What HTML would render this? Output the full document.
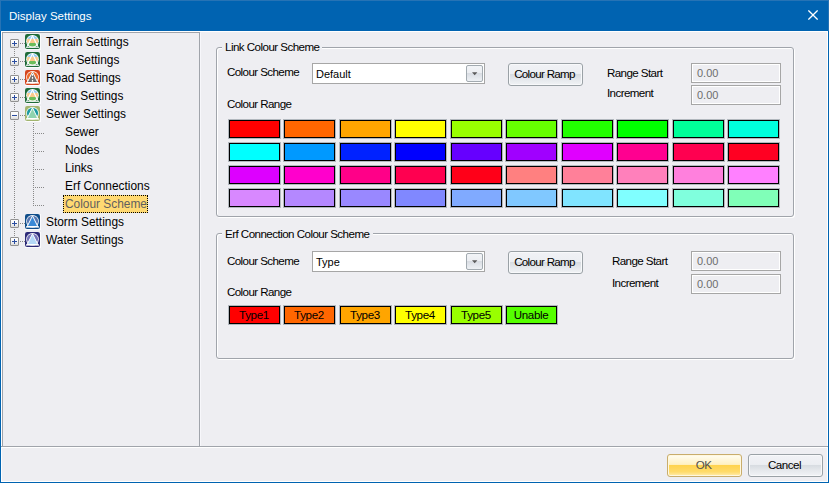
<!DOCTYPE html>
<html><head><meta charset="utf-8"><style>
*{box-sizing:border-box;margin:0;padding:0}
html,body{width:829px;height:483px;overflow:hidden;background:#EEEEF2;font-family:"Liberation Sans",sans-serif}
#win{position:absolute;left:0;top:0;width:829px;height:483px;background:#EEEEF2}
#title{position:absolute;left:0;top:0;width:829px;height:31px;background:#0063B1;box-shadow:inset 1px 1px 0 #2673B5, inset -1px 0 0 #2673B5}
#title .tx{position:absolute;left:9px;top:9px;font-size:11.5px;line-height:14px;color:#fff;white-space:nowrap}
#close{position:absolute;left:808px;top:10px}
.hl{position:absolute;background:#fff}
.gl{position:absolute;background:#A0A4AB}
.pm{position:absolute;left:10px;width:9px;height:9px;border:1px solid #919191;border-radius:1px;background:linear-gradient(#fff 0%,#f7f7f7 50%,#dcdcdc 100%)}
.ph{position:absolute;left:1px;top:3px;width:5px;height:1px;background:#2A4CA0}
.pv{position:absolute;left:3px;top:1px;width:1px;height:5px;background:#2A4CA0}
.icw{position:absolute;left:25px;width:16px;height:16px}
.ico{display:block}
.tt{position:absolute;font-size:11.9px;line-height:19px;color:#000;white-space:nowrap}
.sel{position:absolute;left:63px;width:85px;height:18px;background:#FFD972;border:1px dotted #000}
.seltxt{color:#5f5f5f}
.lab{position:absolute;font-size:11.6px;letter-spacing:-0.6px;line-height:13px;color:#000;white-space:nowrap}
.grp{position:absolute;left:216px;width:578px;border:1px solid #A0A4AB;border-radius:3px;box-shadow:inset 1px 1px 0 #fff, 1px 1px 0 #fff}
.legend{position:absolute;left:222px;height:14px;background:#EEEEF2;font-size:11.6px;letter-spacing:-0.55px;line-height:14px;padding-left:3px;white-space:nowrap}
.combo{position:absolute;left:312px;width:173px;height:21px;background:#fff;border:1px solid #A6A6A6}
.ctext{position:absolute;left:3px;top:4px;font-size:11px;letter-spacing:0px;line-height:13px;white-space:nowrap}
.dbtn{position:absolute;left:153px;top:1px;width:17px;height:17px;border:1px solid #A2AAB0;border-radius:2px;background:linear-gradient(#F2F4F7 0%,#ECEEF2 45%,#D9DDE3 50%,#EEF1F5 100%);overflow:hidden}
.arrow{position:absolute;left:5px;top:6px}
.btn{position:absolute;border:1px solid #9AA1A6;border-radius:3px;background:linear-gradient(#F1F2F6 0%,#ECEEF2 45%,#D8DCE1 50%,#E6E9ED 75%,#F1F3F6 100%);text-align:center;box-shadow:inset 0 0 0 1px #F8F9FB}
.btn span,.okb span{position:absolute;left:0;right:2px;top:3px;font-size:11.6px;letter-spacing:-0.7px;line-height:13px;white-space:nowrap;color:#000}
.okb{position:absolute;border:1px solid #C9AD6C;border-radius:3px;background:linear-gradient(#FFFDF3 0%,#FFF1C2 45%,#FFD34E 50%,#FFDB6B 80%,#FFEDB0 100%);text-align:center;box-shadow:inset 0 0 0 1px #FFF8E0}
.okb span{color:#505050}
.tb{position:absolute;left:691px;width:90px;height:20px;border:1px solid #A6A6A6;box-shadow:inset 0 0 0 1px #fff;background:#EEEEF2}
.tb span{position:absolute;left:5px;top:3px;font-size:11px;line-height:13px;color:#6D6D6D;white-space:nowrap}
.sw{position:absolute;width:51px;height:18px;border:1px solid #000;box-shadow:0 0 0 1px rgba(40,60,70,.3)}
.swt{padding-right:1px;text-align:center;font-size:11.6px;letter-spacing:-0.35px;line-height:16px;color:#000;white-space:nowrap}
</style></head><body>
<div id="win">
<div id="title"><div class="tx">Display Settings</div>
<svg id="close" width="10" height="10" viewBox="0 0 10 10"><path d="M0.4 0.4 L9.6 9.6" stroke="#fff" stroke-width="1.25"/><path d="M9.6 0.4 L0.4 9.6" stroke="#fff" stroke-width="1.25"/></svg>
</div>
<div style="position:absolute;left:0;top:31px;width:1px;height:452px;background:#0063B1"></div><div style="position:absolute;left:828px;top:31px;width:1px;height:452px;background:#0063B1"></div><div style="position:absolute;left:0;top:482px;width:829px;height:1px;background:#0063B1"></div>
<div class="hl" style="left:1px;top:31px;width:827px;height:1px"></div>
<div class="hl" style="left:1px;top:31px;width:1px;height:451px"></div>
<div class="hl" style="left:827px;top:31px;width:1px;height:451px"></div>
<div class="hl" style="left:1px;top:481px;width:827px;height:1px"></div>
<div class="gl" style="left:2px;top:32px;width:198px;height:1px"></div>
<div class="gl" style="left:2px;top:32px;width:1px;height:415px"></div>
<div class="gl" style="left:199px;top:32px;width:1px;height:415px"></div>
<div class="gl" style="left:1px;top:446px;width:827px;height:1px"></div><div class="hl" style="left:200px;top:33px;width:1px;height:413px;background:#F7F7FB"></div>
<div class="hl" style="left:1px;top:447px;width:827px;height:1px"></div>
<div style="position:absolute;left:0;top:0;fill:#888"><svg style="position:absolute;left:0;top:0" width="200" height="260"><rect x="20" y="43" width="1" height="1"/><rect x="22" y="43" width="1" height="1"/><rect x="24" y="43" width="1" height="1"/><rect x="20" y="61" width="1" height="1"/><rect x="22" y="61" width="1" height="1"/><rect x="24" y="61" width="1" height="1"/><rect x="20" y="79" width="1" height="1"/><rect x="22" y="79" width="1" height="1"/><rect x="24" y="79" width="1" height="1"/><rect x="20" y="97" width="1" height="1"/><rect x="22" y="97" width="1" height="1"/><rect x="24" y="97" width="1" height="1"/><rect x="20" y="115" width="1" height="1"/><rect x="22" y="115" width="1" height="1"/><rect x="24" y="115" width="1" height="1"/><rect x="35" y="133" width="1" height="1"/><rect x="37" y="133" width="1" height="1"/><rect x="39" y="133" width="1" height="1"/><rect x="41" y="133" width="1" height="1"/><rect x="43" y="133" width="1" height="1"/><rect x="35" y="151" width="1" height="1"/><rect x="37" y="151" width="1" height="1"/><rect x="39" y="151" width="1" height="1"/><rect x="41" y="151" width="1" height="1"/><rect x="43" y="151" width="1" height="1"/><rect x="35" y="169" width="1" height="1"/><rect x="37" y="169" width="1" height="1"/><rect x="39" y="169" width="1" height="1"/><rect x="41" y="169" width="1" height="1"/><rect x="43" y="169" width="1" height="1"/><rect x="35" y="187" width="1" height="1"/><rect x="37" y="187" width="1" height="1"/><rect x="39" y="187" width="1" height="1"/><rect x="41" y="187" width="1" height="1"/><rect x="43" y="187" width="1" height="1"/><rect x="35" y="205" width="1" height="1"/><rect x="37" y="205" width="1" height="1"/><rect x="39" y="205" width="1" height="1"/><rect x="41" y="205" width="1" height="1"/><rect x="43" y="205" width="1" height="1"/><rect x="20" y="223" width="1" height="1"/><rect x="22" y="223" width="1" height="1"/><rect x="24" y="223" width="1" height="1"/><rect x="20" y="241" width="1" height="1"/><rect x="22" y="241" width="1" height="1"/><rect x="24" y="241" width="1" height="1"/><rect x="14" y="49" width="1" height="1"/><rect x="14" y="51" width="1" height="1"/><rect x="14" y="53" width="1" height="1"/><rect x="14" y="55" width="1" height="1"/><rect x="14" y="67" width="1" height="1"/><rect x="14" y="69" width="1" height="1"/><rect x="14" y="71" width="1" height="1"/><rect x="14" y="73" width="1" height="1"/><rect x="14" y="85" width="1" height="1"/><rect x="14" y="87" width="1" height="1"/><rect x="14" y="89" width="1" height="1"/><rect x="14" y="91" width="1" height="1"/><rect x="14" y="103" width="1" height="1"/><rect x="14" y="105" width="1" height="1"/><rect x="14" y="107" width="1" height="1"/><rect x="14" y="109" width="1" height="1"/><rect x="14" y="121" width="1" height="1"/><rect x="14" y="123" width="1" height="1"/><rect x="14" y="125" width="1" height="1"/><rect x="14" y="127" width="1" height="1"/><rect x="14" y="129" width="1" height="1"/><rect x="14" y="131" width="1" height="1"/><rect x="14" y="133" width="1" height="1"/><rect x="14" y="135" width="1" height="1"/><rect x="14" y="137" width="1" height="1"/><rect x="14" y="139" width="1" height="1"/><rect x="14" y="141" width="1" height="1"/><rect x="14" y="143" width="1" height="1"/><rect x="14" y="145" width="1" height="1"/><rect x="14" y="147" width="1" height="1"/><rect x="14" y="149" width="1" height="1"/><rect x="14" y="151" width="1" height="1"/><rect x="14" y="153" width="1" height="1"/><rect x="14" y="155" width="1" height="1"/><rect x="14" y="157" width="1" height="1"/><rect x="14" y="159" width="1" height="1"/><rect x="14" y="161" width="1" height="1"/><rect x="14" y="163" width="1" height="1"/><rect x="14" y="165" width="1" height="1"/><rect x="14" y="167" width="1" height="1"/><rect x="14" y="169" width="1" height="1"/><rect x="14" y="171" width="1" height="1"/><rect x="14" y="173" width="1" height="1"/><rect x="14" y="175" width="1" height="1"/><rect x="14" y="177" width="1" height="1"/><rect x="14" y="179" width="1" height="1"/><rect x="14" y="181" width="1" height="1"/><rect x="14" y="183" width="1" height="1"/><rect x="14" y="185" width="1" height="1"/><rect x="14" y="187" width="1" height="1"/><rect x="14" y="189" width="1" height="1"/><rect x="14" y="191" width="1" height="1"/><rect x="14" y="193" width="1" height="1"/><rect x="14" y="195" width="1" height="1"/><rect x="14" y="197" width="1" height="1"/><rect x="14" y="199" width="1" height="1"/><rect x="14" y="201" width="1" height="1"/><rect x="14" y="203" width="1" height="1"/><rect x="14" y="205" width="1" height="1"/><rect x="14" y="207" width="1" height="1"/><rect x="14" y="209" width="1" height="1"/><rect x="14" y="211" width="1" height="1"/><rect x="14" y="213" width="1" height="1"/><rect x="14" y="215" width="1" height="1"/><rect x="14" y="217" width="1" height="1"/><rect x="14" y="229" width="1" height="1"/><rect x="14" y="231" width="1" height="1"/><rect x="14" y="233" width="1" height="1"/><rect x="14" y="235" width="1" height="1"/><rect x="33" y="123" width="1" height="1"/><rect x="33" y="125" width="1" height="1"/><rect x="33" y="127" width="1" height="1"/><rect x="33" y="129" width="1" height="1"/><rect x="33" y="131" width="1" height="1"/><rect x="33" y="133" width="1" height="1"/><rect x="33" y="135" width="1" height="1"/><rect x="33" y="137" width="1" height="1"/><rect x="33" y="139" width="1" height="1"/><rect x="33" y="141" width="1" height="1"/><rect x="33" y="143" width="1" height="1"/><rect x="33" y="145" width="1" height="1"/><rect x="33" y="147" width="1" height="1"/><rect x="33" y="149" width="1" height="1"/><rect x="33" y="151" width="1" height="1"/><rect x="33" y="153" width="1" height="1"/><rect x="33" y="155" width="1" height="1"/><rect x="33" y="157" width="1" height="1"/><rect x="33" y="159" width="1" height="1"/><rect x="33" y="161" width="1" height="1"/><rect x="33" y="163" width="1" height="1"/><rect x="33" y="165" width="1" height="1"/><rect x="33" y="167" width="1" height="1"/><rect x="33" y="169" width="1" height="1"/><rect x="33" y="171" width="1" height="1"/><rect x="33" y="173" width="1" height="1"/><rect x="33" y="175" width="1" height="1"/><rect x="33" y="177" width="1" height="1"/><rect x="33" y="179" width="1" height="1"/><rect x="33" y="181" width="1" height="1"/><rect x="33" y="183" width="1" height="1"/><rect x="33" y="185" width="1" height="1"/><rect x="33" y="187" width="1" height="1"/><rect x="33" y="189" width="1" height="1"/><rect x="33" y="191" width="1" height="1"/><rect x="33" y="193" width="1" height="1"/><rect x="33" y="195" width="1" height="1"/><rect x="33" y="197" width="1" height="1"/><rect x="33" y="199" width="1" height="1"/><rect x="33" y="201" width="1" height="1"/><rect x="33" y="203" width="1" height="1"/><rect x="33" y="205" width="1" height="1"/></svg></div>
<div style="fill:#7a7a7a"><div class="pm" style="top:39px"><div class="ph"></div><div class="pv"></div></div><div class="icw" style="top:34px"><svg class="ico" width="16" height="16" viewBox="0 0 16 16"><rect x="15" y="0" width="1" height="16" fill="#FBFBFD"/><rect x="0" y="15" width="16" height="1" fill="#FBFBFD"/>
<rect x="0" y="0" width="15" height="15" rx="2.2" fill="#1E6B39"/>
<circle cx="7.5" cy="7.3" r="6.3" fill="#fff"/>
<clipPath id="ct0"><circle cx="7.5" cy="7.2" r="5.5"/></clipPath>
<g clip-path="url(#ct0)">
<rect x="0" y="0" width="16" height="4.9" fill="#8DC9F4"/>
<rect x="0" y="4.9" width="16" height="4.1" fill="#F9C98B"/>
<rect x="0" y="9" width="16" height="6" fill="#6CBD5B"/>
</g>
<path d="M2.2 12.5 L7.5 1.8 L12.8 12.5" fill="none" stroke="#fff" stroke-width="1.15" stroke-linejoin="round"/>
<rect x="1" y="12.7" width="13" height="1.1" fill="#fff"/>
</svg></div><div class="tt" style="top:33px;left:46px">Terrain Settings</div><div class="pm" style="top:57px"><div class="ph"></div><div class="pv"></div></div><div class="icw" style="top:52px"><svg class="ico" width="16" height="16" viewBox="0 0 16 16"><rect x="15" y="0" width="1" height="16" fill="#FBFBFD"/><rect x="0" y="15" width="16" height="1" fill="#FBFBFD"/>
<rect x="0" y="0" width="15" height="15" rx="2.2" fill="#1E6B39"/>
<circle cx="7.5" cy="7.3" r="6.3" fill="#fff"/>
<clipPath id="ct1"><circle cx="7.5" cy="7.2" r="5.5"/></clipPath>
<g clip-path="url(#ct1)">
<rect x="0" y="0" width="16" height="4.9" fill="#8DC9F4"/>
<rect x="0" y="4.9" width="16" height="4.1" fill="#F9C98B"/>
<rect x="0" y="9" width="16" height="6" fill="#6CBD5B"/>
</g>
<path d="M2.2 12.5 L7.5 1.8 L12.8 12.5" fill="none" stroke="#fff" stroke-width="1.15" stroke-linejoin="round"/>
<rect x="1" y="12.7" width="13" height="1.1" fill="#fff"/>
</svg></div><div class="tt" style="top:51px;left:46px">Bank Settings</div><div class="pm" style="top:75px"><div class="ph"></div><div class="pv"></div></div><div class="icw" style="top:70px"><svg class="ico" width="16" height="16" viewBox="0 0 16 16"><rect x="15" y="0" width="1" height="16" fill="#FBFBFD"/><rect x="0" y="15" width="16" height="1" fill="#FBFBFD"/>
<rect x="0" y="0" width="15" height="15" rx="2.2" fill="#D5441C"/>
<circle cx="7.5" cy="7.3" r="6.3" fill="#fff"/>
<circle cx="7.5" cy="7.3" r="5.6" fill="#EE6A2A"/>
<path d="M2.2 12.5 L7.5 1.8 L12.8 12.5 Z" fill="#6F6F6F" stroke="#fff" stroke-width="1" stroke-linejoin="round"/>
<rect x="6.9" y="4.0" width="1.2" height="1.8" fill="#fff"/><rect x="6.9" y="6.9" width="1.2" height="1.9" fill="#fff"/><rect x="6.9" y="9.9" width="1.2" height="1.8" fill="#fff"/>
<rect x="1" y="12.3" width="13" height="1.3" fill="#fff"/>
</svg></div><div class="tt" style="top:69px;left:46px">Road Settings</div><div class="pm" style="top:93px"><div class="ph"></div><div class="pv"></div></div><div class="icw" style="top:88px"><svg class="ico" width="16" height="16" viewBox="0 0 16 16"><rect x="15" y="0" width="1" height="16" fill="#FBFBFD"/><rect x="0" y="15" width="16" height="1" fill="#FBFBFD"/>
<rect x="0" y="0" width="15" height="15" rx="2.2" fill="#1E6B39"/>
<circle cx="7.5" cy="7.3" r="6.3" fill="#fff"/>
<clipPath id="ct3"><circle cx="7.5" cy="7.2" r="5.5"/></clipPath>
<g clip-path="url(#ct3)">
<rect x="0" y="0" width="16" height="4.9" fill="#8DC9F4"/>
<rect x="0" y="4.9" width="16" height="4.1" fill="#F9C98B"/>
<rect x="0" y="9" width="16" height="6" fill="#6CBD5B"/>
</g>
<path d="M2.2 12.5 L7.5 1.8 L12.8 12.5" fill="none" stroke="#fff" stroke-width="1.15" stroke-linejoin="round"/>
<rect x="1" y="12.7" width="13" height="1.1" fill="#fff"/>
</svg></div><div class="tt" style="top:87px;left:46px">String Settings</div><div class="pm" style="top:111px"><div class="ph"></div></div><div class="icw" style="top:106px"><svg class="ico" width="16" height="16" viewBox="0 0 16 16"><rect x="15" y="0" width="1" height="16" fill="#FBFBFD"/><rect x="0" y="15" width="16" height="1" fill="#FBFBFD"/>
<rect x="0" y="0" width="15" height="15" rx="2.2" fill="#A2B56F"/>
<circle cx="7.5" cy="7.3" r="6.3" fill="#fff"/>
<circle cx="7.5" cy="7.3" r="5.6" fill="#1B9AA2"/>
<path d="M2.2 12.5 L7.5 1.8 L12.8 12.5 Z" fill="#8ED3AE" stroke="#fff" stroke-width="1" stroke-linejoin="round"/>

<rect x="1" y="12.3" width="13" height="1.3" fill="#fff"/>
</svg></div><div class="tt" style="top:105px;left:46px">Sewer Settings</div><div class="tt" style="top:123px;left:65px">Sewer</div><div class="tt" style="top:141px;left:65px">Nodes</div><div class="tt" style="top:159px;left:65px">Links</div><div class="tt" style="top:177px;left:65px">Erf Connections</div><div class="sel" style="top:195px"></div><div class="tt seltxt" style="top:195px;left:65px">Colour Scheme</div><div class="pm" style="top:219px"><div class="ph"></div><div class="pv"></div></div><div class="icw" style="top:214px"><svg class="ico" width="16" height="16" viewBox="0 0 16 16"><rect x="15" y="0" width="1" height="16" fill="#FBFBFD"/><rect x="0" y="15" width="16" height="1" fill="#FBFBFD"/>
<rect x="0" y="0" width="15" height="15" rx="2.2" fill="#0F4D8A"/>
<circle cx="7.5" cy="7.3" r="6.3" fill="#fff"/>
<circle cx="7.5" cy="7.3" r="5.6" fill="#5676B0"/>
<path d="M2.2 12.5 L7.5 1.8 L12.8 12.5 Z" fill="#3A89D6" stroke="#fff" stroke-width="1" stroke-linejoin="round"/>

<rect x="1" y="12.3" width="13" height="1.3" fill="#fff"/>
</svg></div><div class="tt" style="top:213px;left:46px">Storm Settings</div><div class="pm" style="top:237px"><div class="ph"></div><div class="pv"></div></div><div class="icw" style="top:232px"><svg class="ico" width="16" height="16" viewBox="0 0 16 16"><rect x="15" y="0" width="1" height="16" fill="#FBFBFD"/><rect x="0" y="15" width="16" height="1" fill="#FBFBFD"/>
<rect x="0" y="0" width="15" height="15" rx="2.2" fill="#2C2A78"/>
<circle cx="7.5" cy="7.3" r="6.3" fill="#fff"/>
<circle cx="7.5" cy="7.3" r="5.6" fill="#7473B8"/>
<path d="M2.2 12.5 L7.5 1.8 L12.8 12.5 Z" fill="#B4D8F7" stroke="#fff" stroke-width="1" stroke-linejoin="round"/>

<rect x="1" y="12.3" width="13" height="1.3" fill="#fff"/>
</svg></div><div class="tt" style="top:231px;left:46px">Water Settings</div></div>
<div class="grp" style="top:47px;height:170px"></div><div class="legend" style="top:40px;width:100px">Link Colour Scheme</div><div class="lab" style="left:227px;top:65px">Colour Scheme</div><div class="combo" style="top:63px"><div class="ctext">Default</div><div class="dbtn"><div class="dtop"></div><svg class="arrow" width="6" height="4" viewBox="0 0 6 4"><path d="M0 0.2 H5.4 L2.7 3.3 Z" fill="#5a5a5a"/></svg></div></div><div class="btn" style="left:508px;top:63px;width:75px;height:23px"><span>Colour Ramp</span></div><div class="lab" style="left:607px;top:66px">Range Start</div><div class="lab" style="left:607px;top:86px">Increment</div><div class="tb" style="top:63px"><span>0.00</span></div><div class="tb" style="top:85px"><span>0.00</span></div><div class="lab" style="left:227px;top:97px">Colour Range</div><div class="grp" style="top:233px;height:126px"></div><div class="legend" style="top:227px;width:151px">Erf Connection Colour Scheme</div><div class="lab" style="left:227px;top:254px">Colour Scheme</div><div class="combo" style="top:251px"><div class="ctext">Type</div><div class="dbtn"><div class="dtop"></div><svg class="arrow" width="6" height="4" viewBox="0 0 6 4"><path d="M0 0.2 H5.4 L2.7 3.3 Z" fill="#5a5a5a"/></svg></div></div><div class="btn" style="left:508px;top:251px;width:75px;height:23px"><span>Colour Ramp</span></div><div class="lab" style="left:612px;top:254px">Range Start</div><div class="lab" style="left:612px;top:276px">Increment</div><div class="tb" style="top:251px"><span>0.00</span></div><div class="tb" style="top:274px"><span>0.00</span></div><div class="lab" style="left:227px;top:285px">Colour Range</div>
<div class="sw" style="left:229px;top:120px;background:#FF0000"></div><div class="sw" style="left:284px;top:120px;background:#FF6600"></div><div class="sw" style="left:340px;top:120px;background:#FFA500"></div><div class="sw" style="left:395px;top:120px;background:#FFFF00"></div><div class="sw" style="left:451px;top:120px;background:#99FF00"></div><div class="sw" style="left:506px;top:120px;background:#66FF00"></div><div class="sw" style="left:562px;top:120px;background:#22FF00"></div><div class="sw" style="left:617px;top:120px;background:#00FF00"></div><div class="sw" style="left:673px;top:120px;background:#00FF99"></div><div class="sw" style="left:728px;top:120px;background:#00FFDD"></div><div class="sw" style="left:229px;top:143px;background:#00FFFF"></div><div class="sw" style="left:284px;top:143px;background:#0099FF"></div><div class="sw" style="left:340px;top:143px;background:#0022FF"></div><div class="sw" style="left:395px;top:143px;background:#0000FF"></div><div class="sw" style="left:451px;top:143px;background:#6600FF"></div><div class="sw" style="left:506px;top:143px;background:#A000FF"></div><div class="sw" style="left:562px;top:143px;background:#E000FF"></div><div class="sw" style="left:617px;top:143px;background:#FF0090"></div><div class="sw" style="left:673px;top:143px;background:#FF0050"></div><div class="sw" style="left:728px;top:143px;background:#FF0022"></div><div class="sw" style="left:229px;top:166px;background:#DD00FF"></div><div class="sw" style="left:284px;top:166px;background:#FF00CC"></div><div class="sw" style="left:340px;top:166px;background:#FF0088"></div><div class="sw" style="left:395px;top:166px;background:#FF0050"></div><div class="sw" style="left:451px;top:166px;background:#FF0018"></div><div class="sw" style="left:506px;top:166px;background:#FF8080"></div><div class="sw" style="left:562px;top:166px;background:#FF8099"></div><div class="sw" style="left:617px;top:166px;background:#FF80BB"></div><div class="sw" style="left:673px;top:166px;background:#FF80DD"></div><div class="sw" style="left:728px;top:166px;background:#FF80FF"></div><div class="sw" style="left:229px;top:189px;background:#D888FF"></div><div class="sw" style="left:284px;top:189px;background:#B488FF"></div><div class="sw" style="left:340px;top:189px;background:#9988FF"></div><div class="sw" style="left:395px;top:189px;background:#8088FF"></div><div class="sw" style="left:451px;top:189px;background:#80AAFF"></div><div class="sw" style="left:506px;top:189px;background:#80C8FF"></div><div class="sw" style="left:562px;top:189px;background:#80E4FF"></div><div class="sw" style="left:617px;top:189px;background:#80FFFF"></div><div class="sw" style="left:673px;top:189px;background:#80FFDD"></div><div class="sw" style="left:728px;top:189px;background:#80FFB8"></div><div class="sw swt" style="left:229px;top:306px;background:#FF0000">Type1</div><div class="sw swt" style="left:284px;top:306px;background:#FF6600">Type2</div><div class="sw swt" style="left:340px;top:306px;background:#FFA500">Type3</div><div class="sw swt" style="left:395px;top:306px;background:#FFFF00">Type4</div><div class="sw swt" style="left:451px;top:306px;background:#99FF00">Type5</div><div class="sw swt" style="left:506px;top:306px;background:#55FF00">Unable</div>
<div class="okb" style="left:667px;top:454px;width:75px;height:23px"><span>OK</span></div>
<div class="btn" style="left:748px;top:454px;width:75px;height:23px"><span><b style="font-weight:normal;letter-spacing:-0.5px">Cancel</b></span></div>
</div>
</body></html>
